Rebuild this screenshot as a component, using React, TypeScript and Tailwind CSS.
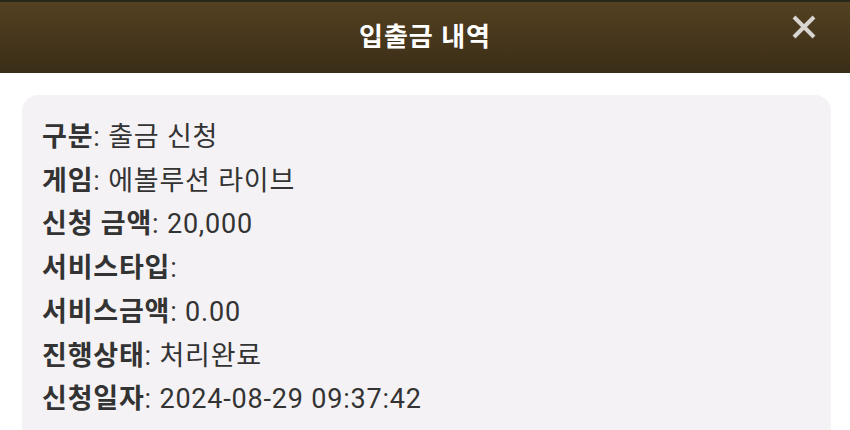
import React from "react";

const rows: { label: string; value: string }[] = [
  { label: "구분", value: "출금 신청" },
  { label: "게임", value: "에볼루션 라이브" },
  { label: "신청 금액", value: "20,000" },
  { label: "서비스타입", value: "" },
  { label: "서비스금액", value: "0.00" },
  { label: "진행상태", value: "처리완료" },
  { label: "신청일자", value: "2024-08-29 09:37:42" },
];

const CloseIcon = () => (
  <svg width="26" height="26" viewBox="0 0 26 26" fill="none">
    <path d="M3 3L23 23M23 3L3 23" stroke="#d8d5d0" strokeWidth="4" strokeLinecap="butt" />
  </svg>
);

const App: React.FC = () => {
  return (
    <div
      className="w-[850px] h-[430px] overflow-hidden bg-white text-[#333]"
      style={{ fontFamily: "Roboto, 'Noto Sans CJK KR', sans-serif" }}
    >
      {/* header bar */}
      <div className="relative h-[73px] border-t-2 border-[#2a2818] bg-gradient-to-b from-[#544121] to-[#3a2d17] flex items-center justify-center">
        <h1 className="text-[26px] font-bold text-white tracking-[1px]">입출금 내역</h1>
        <button className="absolute right-[33px] top-[12px]">
          <CloseIcon />
        </button>
      </div>

      {/* detail card */}
      <div className="pl-[22px] pr-[19px] pt-[22px]">
        <div className="rounded-2xl bg-[#f4f2f5] px-[20px] pt-[21px] pb-6">
          {rows.map((r) => (
            <div key={r.label} className="text-[27px] leading-[43.7px] tracking-[0.8px]">
              <span className="font-bold">{r.label}</span>: {r.value}
            </div>
          ))}
        </div>
      </div>
    </div>
  );
};

export default App;
